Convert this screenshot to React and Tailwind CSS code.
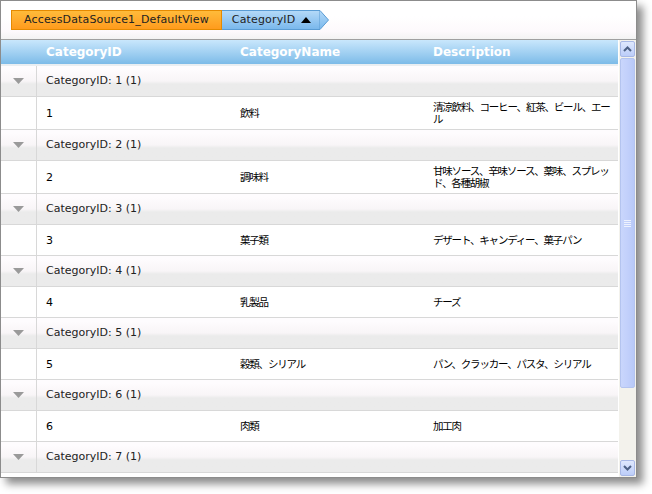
import React from 'react'

const ROWS = [
  { id: 1, name: '飲料', desc: '清涼飲料、コーヒー、紅茶、ビール、エール' },
  { id: 2, name: '調味料', desc: '甘味ソース、辛味ソース、薬味、スプレッド、各種胡椒' },
  { id: 3, name: '菓子類', desc: 'デザート、キャンディー、菓子パン' },
  { id: 4, name: '乳製品', desc: 'チーズ' },
  { id: 5, name: '穀類、シリアル', desc: 'パン、クラッカー、パスタ、シリアル' },
  { id: 6, name: '肉類', desc: '加工肉' },
]

const font = "font-['DejaVu_Sans','Noto_Sans_CJK_JP',sans-serif]"
const jp = "font-['Noto_Sans_CJK_JP',sans-serif] text-[10.5px] tracking-[-1.2px] leading-[12px]"

function GroupRow({ id }) {
  return (
    <div className="flex h-[31px] border-b border-[#d8d8d8] bg-gradient-to-b from-[#fefcfe] from-10% via-[#f8f5f7] via-50% to-[#ebebeb] to-60%">
      <div className="w-[36px] shrink-0 border-r border-[#d8d8d8] flex items-center justify-center">
        <svg width="11" height="6" viewBox="0 0 11 6"><path d="M0 0h11L5.5 6z" fill="#9a9a9a" /></svg>
      </div>
      <div className="flex items-center pl-[9px] text-[11px] text-[#222]">CategoryID: {id} (1)</div>
    </div>
  )
}

function DataRow({ row }) {
  return (
    <div className="flex min-h-[31px] border-b border-[#d8d8d8] bg-white text-[11px] leading-[12px] text-black">
      <div className="w-[36px] shrink-0 border-r border-[#d8d8d8]" />
      <div className="w-[193px] shrink-0 flex items-center pl-[9px] pt-[1px]">{row.id}</div>
      <div className={`w-[193px] shrink-0 flex items-center pl-[10px] ${jp}`}>{row.name}</div>
      <div className={`flex-1 flex items-center pl-[10px] pr-[4px] py-[4px] ${jp}`}>{row.desc}</div>
    </div>
  )
}

export default function App() {
  return (
    <div className={`w-[652px] h-[494px] bg-white ${font}`}>
      <div className="w-[637px] h-[478px] border border-[#8c8c8c] bg-white flex flex-col shadow-[6px_6px_8px_rgba(0,0,0,0.45)] overflow-hidden">
        {/* group-by area */}
        <div className="h-[39px] shrink-0 bg-gradient-to-b from-white from-40% via-[#fdf9fc] via-80% to-[#f3f3f3] border-b border-[#a0a0a0] pt-[9px] pl-[10px] flex items-start">
          <div className="h-[20px] px-[12px] flex items-center text-[11px] tracking-[0.15px] text-[#222] border border-[#e58a00] bg-gradient-to-b from-[#ffbb3a] to-[#ff9b1c]">
            AccessDataSource1_DefaultView
          </div>
          <div className="flex h-[20px]">
            <div className="h-[20px] pl-[10px] pr-[8px] flex items-center gap-[6px] text-[11px] tracking-[0.15px] text-[#222] border-y border-[#5a9cd4] bg-gradient-to-b from-[#b3d9f8] to-[#7ab8ec]">
              CategoryID
              <svg width="10" height="6" viewBox="0 0 10 6"><path d="M0 6h10L5 0z" fill="#000" /></svg>
            </div>
            <svg width="10" height="20" viewBox="0 0 10 20">
              <defs>
                <linearGradient id="bg" x1="0" y1="0" x2="0" y2="1">
                  <stop offset="0" stopColor="#b3d9f8" />
                  <stop offset="1" stopColor="#7ab8ec" />
                </linearGradient>
              </defs>
              <path d="M0 0.5H1L9.5 10L1 19.5H0z" fill="url(#bg)" stroke="#5a9cd4" />
            </svg>
          </div>
        </div>

        <div className="flex flex-1 min-h-0">
          <div className="flex-1 min-w-0 flex flex-col">
            {/* header */}
            <div className="h-[26px] shrink-0 flex bg-gradient-to-b from-[#c9e7fc] to-[#7cbbe8] border-b-2 border-[#e9eef2] text-[12px] font-bold text-white">
              <div className="w-[36px] shrink-0" />
              <div className="w-[193px] shrink-0 flex items-center pl-[9px]">CategoryID</div>
              <div className="w-[193px] shrink-0 flex items-center pl-[10px]">CategoryName</div>
              <div className="flex-1 flex items-center pl-[10px]">Description</div>
            </div>
            <div className="flex-1 overflow-hidden">
              {ROWS.map(r => (
                <React.Fragment key={r.id}>
                  <GroupRow id={r.id} />
                  <DataRow row={r} />
                </React.Fragment>
              ))}
              <GroupRow id={7} />
            </div>
          </div>

          {/* scrollbar */}
          <div className="w-[18px] shrink-0 flex flex-col bg-[#f3f2ec] border-l border-white p-[1px]">
            <div className="h-[16px] shrink-0 rounded-[2px] border border-[#a8b8e6] bg-gradient-to-b from-[#dfe8fd] to-[#bccdf9] flex items-center justify-center">
              <svg width="9" height="6" viewBox="0 0 9 6"><path d="M1 5L4.5 1.5L8 5" fill="none" stroke="#4d6185" strokeWidth="2" /></svg>
            </div>
            <div className="h-[330px] shrink-0 mt-[1px] rounded-[2px] border border-[#b4c4ef] bg-gradient-to-r from-[#c9d6fc] via-[#c2d0fb] to-[#b8c9f8] flex items-center justify-center">
              <div className="flex flex-col gap-[1px]">
                <div className="w-[7px] h-[1px] bg-[#eef2fe]" />
                <div className="w-[7px] h-[1px] bg-[#eef2fe]" />
                <div className="w-[7px] h-[1px] bg-[#eef2fe]" />
                <div className="w-[7px] h-[1px] bg-[#eef2fe]" />
              </div>
            </div>
            <div className="flex-1" />
            <div className="h-[16px] shrink-0 rounded-[2px] border border-[#a8b8e6] bg-gradient-to-b from-[#dfe8fd] to-[#bccdf9] flex items-center justify-center">
              <svg width="9" height="6" viewBox="0 0 9 6"><path d="M1 1L4.5 4.5L8 1" fill="none" stroke="#4d6185" strokeWidth="2" /></svg>
            </div>
          </div>
        </div>
      </div>
    </div>
  )
}
